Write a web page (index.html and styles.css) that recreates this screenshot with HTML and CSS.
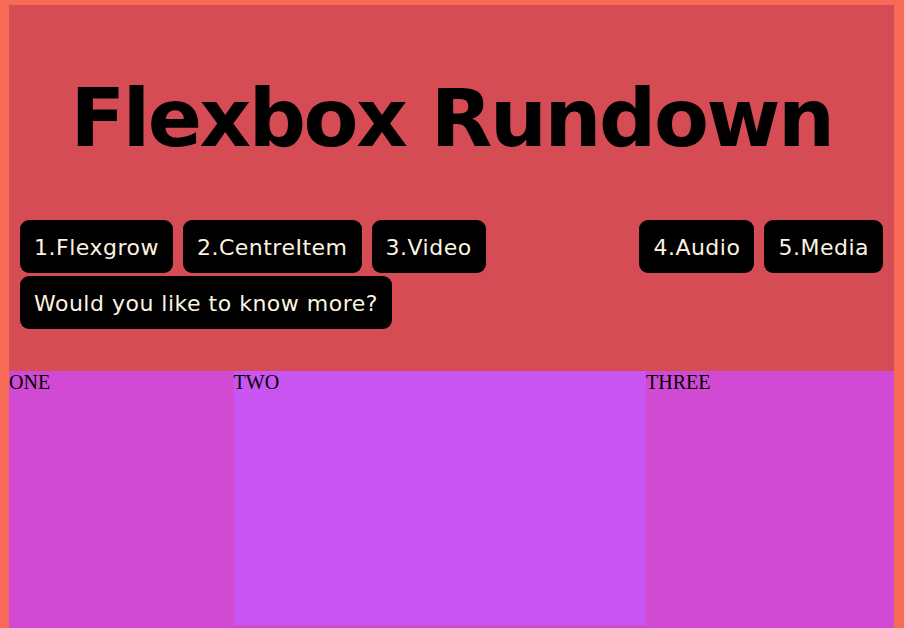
FILE: index.html
```html
<!DOCTYPE html>
<html lang="en">
<head>
<meta charset="utf-8">
<title>Flexbox Rundown</title>
<link rel="stylesheet" href="styles.css">
</head>
<body>
<header class="site-header">
  <h1 class="title">Flexbox Rundown</h1>
  <nav class="nav">
    <a class="nav-btn" href="#">1.Flexgrow</a>
    <a class="nav-btn" href="#">2.CentreItem</a>
    <a class="nav-btn" href="#">3.Video</a>
    <a class="nav-btn push" href="#">4.Audio</a>
    <a class="nav-btn" href="#">5.Media</a>
    <a class="nav-btn" href="#">Would you like to know more?</a>
  </nav>
</header>
<main class="sections">
  <section class="box box-one">ONE</section>
  <section class="box box-two">TWO</section>
  <section class="box box-three">THREE</section>
</main>
</body>
</html>
```
FILE: styles.css
```css
body {
  margin: 5px 10px 0 9px;
  background: #f76a55;
  font-family: "Liberation Serif", "Times New Roman", serif;
}
.site-header {
  background: #d64c55;
  padding: 13px 11px 42px;
}
.title {
  margin: 54px 0 55px;
  font-family: "DejaVu Sans", Verdana, sans-serif;
  font-weight: bold;
  font-size: 80px;
  line-height: 93px;
  letter-spacing: -2.4px;
  text-align: center;
  color: #000;
}
.nav {
  display: flex;
  flex-wrap: wrap;
  column-gap: 10px;
  row-gap: 3px;
}
.nav-btn {
  display: block;
  background: #000;
  color: #fdf3e0;
  text-decoration: none;
  font-family: "DejaVu Sans", Verdana, sans-serif;
  font-size: 22px;
  line-height: 27px;
  letter-spacing: 0.5px;
  padding: 14px 14px 12px;
  border-radius: 9px;
}
.push {
  margin-left: auto;
}
.sections {
  display: flex;
  align-items: flex-start;
  background: #d14ad4;
  height: 257px;
}
.box {
  font-size: 20px;
  color: #000;
  height: 257px;
}
.box-one {
  flex: 1 1 auto;
  background: #d14ad4;
}
.box-two {
  flex: 2 1 auto;
  background: #c955f2;
  height: 254px;
}
.box-three {
  flex: 1 1 auto;
  background: #d14ad4;
}
```
